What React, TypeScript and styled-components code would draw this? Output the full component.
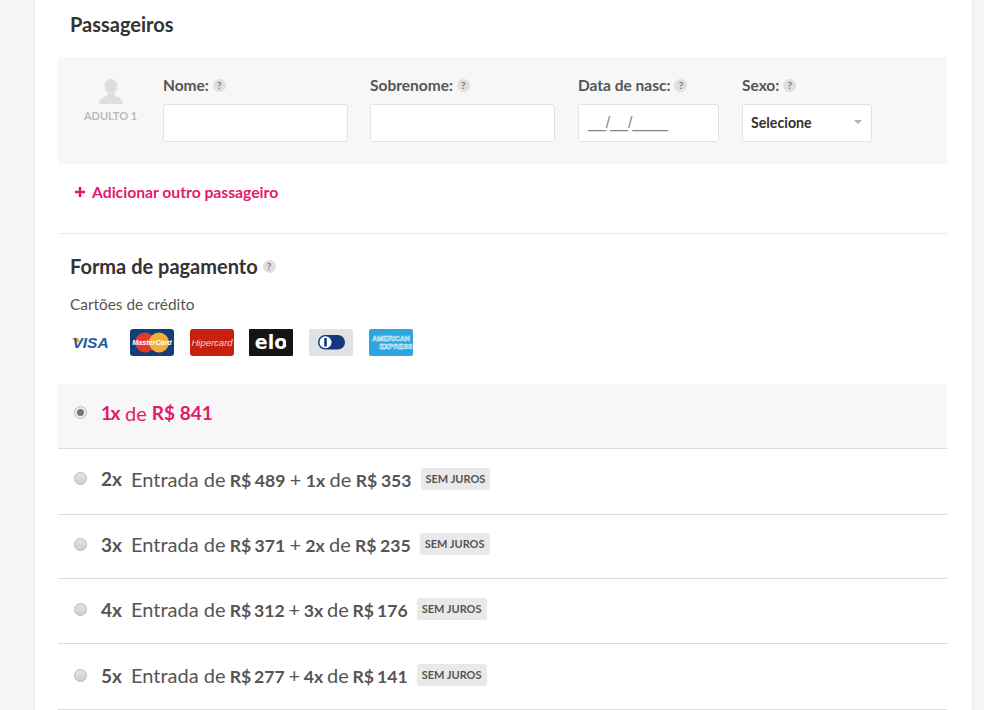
import React from 'react'
import styled, {createGlobalStyle} from 'styled-components'

const GlobalStyle = createGlobalStyle`
  html, body {
    margin: 0;
    height: 710px;
    overflow: hidden;
    background: #f5f5f5;
    font-family: Lato, "Open Sans", sans-serif;
    color: #444;
  }
`

const Page = styled.div`
  height: 710px;
  padding-left: 34px;
  overflow: hidden;
`

const Card = styled.main`
  width: 939px;
  height: 710px;
  box-sizing: border-box;
  background: #fff;
  border-left: 1px solid #e9e9e9;
  border-right: 1px solid #e9e9e9;
  padding: 13px 25px 0 23px;
`

const Title = styled.h2`
  display: flex;
  align-items: center;
  gap: 5px;
  margin: 0;
  padding-left: 12px;
  height: 22px;
  font-size: 20px;
  line-height: 22px;
  font-weight: 700;
  color: #333;
`

const PassengerBox = styled.section`
  display: flex;
  height: 107px;
  margin-top: 22px;
  box-sizing: border-box;
  padding: 19px 0 0 25px;
  background: #f7f7f7;
  border-radius: 2px;
`

const Avatar = styled.div`
  width: 55px;
  margin: 3px 25px 0 0;
  display: flex;
  flex-direction: column;
  align-items: center;
  font-size: 11px;
  line-height: 14px;
  font-weight: 700;
  color: #bbb;
  white-space: nowrap;
`

const Field = styled.label<{$width: number; $gap: number}>`
  display: block;
  width: ${p => p.$width}px;
  margin-right: ${p => p.$gap}px;
`

const FieldLabel = styled.span`
  display: flex;
  align-items: center;
  gap: 4px;
  height: 18px;
  font-size: 15.5px;
  line-height: 18px;
  font-weight: 700;
  color: #555;
  white-space: nowrap;
`

const Help = styled.span`
  display: inline-flex;
  align-items: center;
  justify-content: center;
  width: 13px;
  height: 13px;
  border-radius: 50%;
  background: #dfdfdf;
  color: #777;
  font-size: 10px;
  line-height: 13px;
  font-weight: 700;
`

const Input = styled.div`
  height: 38px;
  margin-top: 10px;
  box-sizing: border-box;
  display: flex;
  align-items: center;
  background: #fff;
  border: 1px solid #e2e2e2;
  border-radius: 3px;
  color: #888;
`

const DateMask = styled.span`
  padding-left: 9px;
  font-family: "Liberation Sans", sans-serif;
  font-size: 16px;
`

const Select = styled(Input)`
  justify-content: space-between;
  padding: 0 9px 2px 8px;
  font-size: 14.2px;
  font-weight: 700;
  color: #333;
`

const Caret = styled.span`
  width: 0;
  height: 0;
  border-left: 4px solid transparent;
  border-right: 4px solid transparent;
  border-top: 4px solid #b5b5b5;
`

const AddLink = styled.a`
  display: flex;
  align-items: center;
  gap: 6px;
  height: 70px;
  box-sizing: border-box;
  padding: 0 0 14px 16px;
  border-bottom: 1px solid #e9e9e9;
  font-size: 15.7px;
  font-weight: 700;
  color: #e5186d;
`

const PlusIcon = styled.svg`
  width: 12px;
  height: 12px;
`

const PaymentTitle = styled(Title)`
  margin-top: 21px;
`

const Subtitle = styled.div`
  margin-top: 18px;
  padding-left: 12px;
  font-size: 15.4px;
  line-height: 18px;
  color: #555;
`

const Brands = styled.div`
  display: flex;
  gap: 15.8px;
  height: 27px;
  margin-top: 16px;
  padding-left: 12px;
`

const Brand = styled.svg`
  display: block;
  width: 44px;
  height: 27px;
`

const Plans = styled.div`
  margin-top: 28px;
`

const Plan = styled.div<{$active?: boolean; $height: number; $lift: number}>`
  display: flex;
  align-items: center;
  height: ${p => p.$height}px;
  box-sizing: border-box;
  padding: 0 0 ${p => p.$lift}px 16px;
  border-bottom: 1px solid #dcdcdc;
  background: ${p => (p.$active ? '#f7f7f7' : '#fff')};
  color: ${p => (p.$active ? '#e5186d' : '#555')};
  font-size: 20px;
  white-space: pre;
`

const Radio = styled.span<{$checked?: boolean}>`
  position: relative;
  flex: none;
  width: 13px;
  height: 13px;
  margin-right: 14px;
  box-sizing: border-box;
  border-radius: 50%;
  border: 1px solid #b9b9b9;
  background: linear-gradient(#e4e4e4, #cfcfcf);
  ${p =>
    p.$checked &&
    `
    background: #eee;
    &::after {
      content: '';
      position: absolute;
      inset: 2px;
      border-radius: 50%;
      background: #777;
    }
  `}
`

const Times = styled.b`
  margin-right: 9px;
  font-size: 19px;
  font-weight: 700;
`

const ActiveTimes = styled(Times)`
  margin-right: 6px;
  letter-spacing: -1.5px;
`

const ActiveValue = styled.b`
  font-size: 19px;
  font-weight: 700;
`

// the amounts after "Entrada de" run a little tighter from one row to the next
const Terms = styled.span<{$squeeze: number}>`
  margin-left: -1px;
  word-spacing: ${p => p.$squeeze}px;
`

const Value = styled.b`
  font-size: 17.6px;
  font-weight: 700;
`

const Badge = styled.span`
  margin-left: 9px;
  padding: 0 5px;
  height: 22px;
  line-height: 22px;
  border-radius: 3px;
  background: #e9e9e9;
  color: #555;
  font-size: 11px;
  font-weight: 700;
`

const PersonIcon = () => (
  <svg width="28" height="26" viewBox="0 0 28 28" fill="#dedede" style={{marginBottom: 4}}>
    <ellipse cx="14" cy="8" rx="7" ry="8" />
    <path d="M1 27c0-6 4-7 9-9v-2h8v2c5 2 9 3 9 9z" />
  </svg>
)

const CardBrands = () => (
  <Brands>
    <Brand viewBox="0 0 44 27">
      <path d="M1 9h7l3 6z" fill="#f0a83a" />
      <text x="20.5" y="19" textAnchor="middle" fontFamily="Liberation Sans" fontSize="15.5" fontStyle="italic" fontWeight="700" fill="#1f5b9a">VISA</text>
    </Brand>
    <Brand viewBox="0 0 44 27">
      <rect width="44" height="27" rx="3" fill="#123f78" />
      <circle cx="15" cy="13.5" r="10" fill="#df3a2b" />
      <circle cx="29" cy="13.5" r="10" fill="#f2b03a" />
      <text x="22" y="16" textAnchor="middle" fontFamily="Liberation Sans" fontSize="7.2" fontStyle="italic" fontWeight="700" fill="#fff">MasterCard</text>
    </Brand>
    <Brand viewBox="0 0 44 27">
      <rect width="44" height="27" rx="3" fill="#c8200f" />
      <text x="22" y="17" textAnchor="middle" fontFamily="Liberation Sans" fontSize="9.5" fontStyle="italic" fill="#f6d5cf">Hipercard</text>
    </Brand>
    <Brand viewBox="0 0 44 27">
      <rect width="44" height="27" rx="1" fill="#151515" />
      <text x="22" y="20" textAnchor="middle" fontFamily="DejaVu Sans" fontSize="19" fontWeight="700" fill="#fff">elo</text>
      <rect x="37" y="12" width="3" height="4" fill="#151515" />
    </Brand>
    <Brand viewBox="0 0 44 27">
      <rect width="44" height="27" rx="2" fill="#e0e2e6" />
      <rect x="9" y="6" width="27" height="14.5" rx="7.25" fill="#14387f" />
      <circle cx="16.5" cy="13.25" r="6" fill="#fff" />
      <path d="M16.5 9v8.5" stroke="#14387f" strokeWidth="2.6" />
    </Brand>
    <Brand viewBox="0 0 44 27">
      <rect width="44" height="27" rx="2" fill="#2ba6de" />
      <text x="22" y="11.5" textAnchor="middle" fontFamily="Liberation Sans" fontSize="7" fontWeight="700" fill="none" stroke="#e8f6fc" strokeWidth="0.5">AMERICAN</text>
      <text x="27" y="20" textAnchor="middle" fontFamily="Liberation Sans" fontSize="7" fontWeight="700" fill="none" stroke="#e8f6fc" strokeWidth="0.5">EXPRESS</text>
    </Brand>
  </Brands>
)

const plans = [
  {times: '2x', first: '489', rest: '1x', value: '353', height: 66, lift: 6, squeeze: -0.7},
  {times: '3x', first: '371', rest: '2x', value: '235', height: 64, lift: 5, squeeze: -0.85},
  {times: '4x', first: '312', rest: '3x', value: '176', height: 65, lift: 4, squeeze: -1.35},
  {times: '5x', first: '277', rest: '4x', value: '141', height: 66, lift: 3, squeeze: -1.35},
]

const App = () => (
  <Page>
    <GlobalStyle />
    <Card>
      <Title>Passageiros</Title>
      <PassengerBox>
        <Avatar>
          <PersonIcon />
          ADULTO 1
        </Avatar>
        <Field $width={185} $gap={22}>
          <FieldLabel>Nome: <Help>?</Help></FieldLabel>
          <Input />
        </Field>
        <Field $width={185} $gap={23}>
          <FieldLabel>Sobrenome: <Help>?</Help></FieldLabel>
          <Input />
        </Field>
        <Field $width={141} $gap={23}>
          <FieldLabel>Data de nasc: <Help>?</Help></FieldLabel>
          <Input><DateMask>__/__/____</DateMask></Input>
        </Field>
        <Field $width={130} $gap={0}>
          <FieldLabel>Sexo: <Help>?</Help></FieldLabel>
          <Select>Selecione <Caret /></Select>
        </Field>
      </PassengerBox>
      <AddLink>
        <PlusIcon viewBox="0 0 12 12">
          <path d="M6 1v10M1 6h10" stroke="#e5186d" strokeWidth="2.4" />
        </PlusIcon>
        Adicionar outro passageiro
      </AddLink>

      <PaymentTitle>Forma de pagamento <Help>?</Help></PaymentTitle>
      <Subtitle>Cartões de crédito</Subtitle>
      <CardBrands />

      <Plans>
        <Plan $active $height={65} $lift={7}>
          <Radio $checked />
          <ActiveTimes>1x</ActiveTimes>
          {'de '}<ActiveValue>R$ 841</ActiveValue>
        </Plan>
        {plans.map(plan => (
          <Plan key={plan.times} $height={plan.height} $lift={plan.lift}>
            <Radio />
            <Times>{plan.times}</Times>
            {'Entrada de '}
            <Terms $squeeze={plan.squeeze}>
              <Value>R$ {plan.first}</Value>{' + '}<Value>{plan.rest}</Value>{' de '}<Value>R$ {plan.value}</Value>
            </Terms>
            <Badge>SEM JUROS</Badge>
          </Plan>
        ))}
      </Plans>
    </Card>
  </Page>
)

export default App
